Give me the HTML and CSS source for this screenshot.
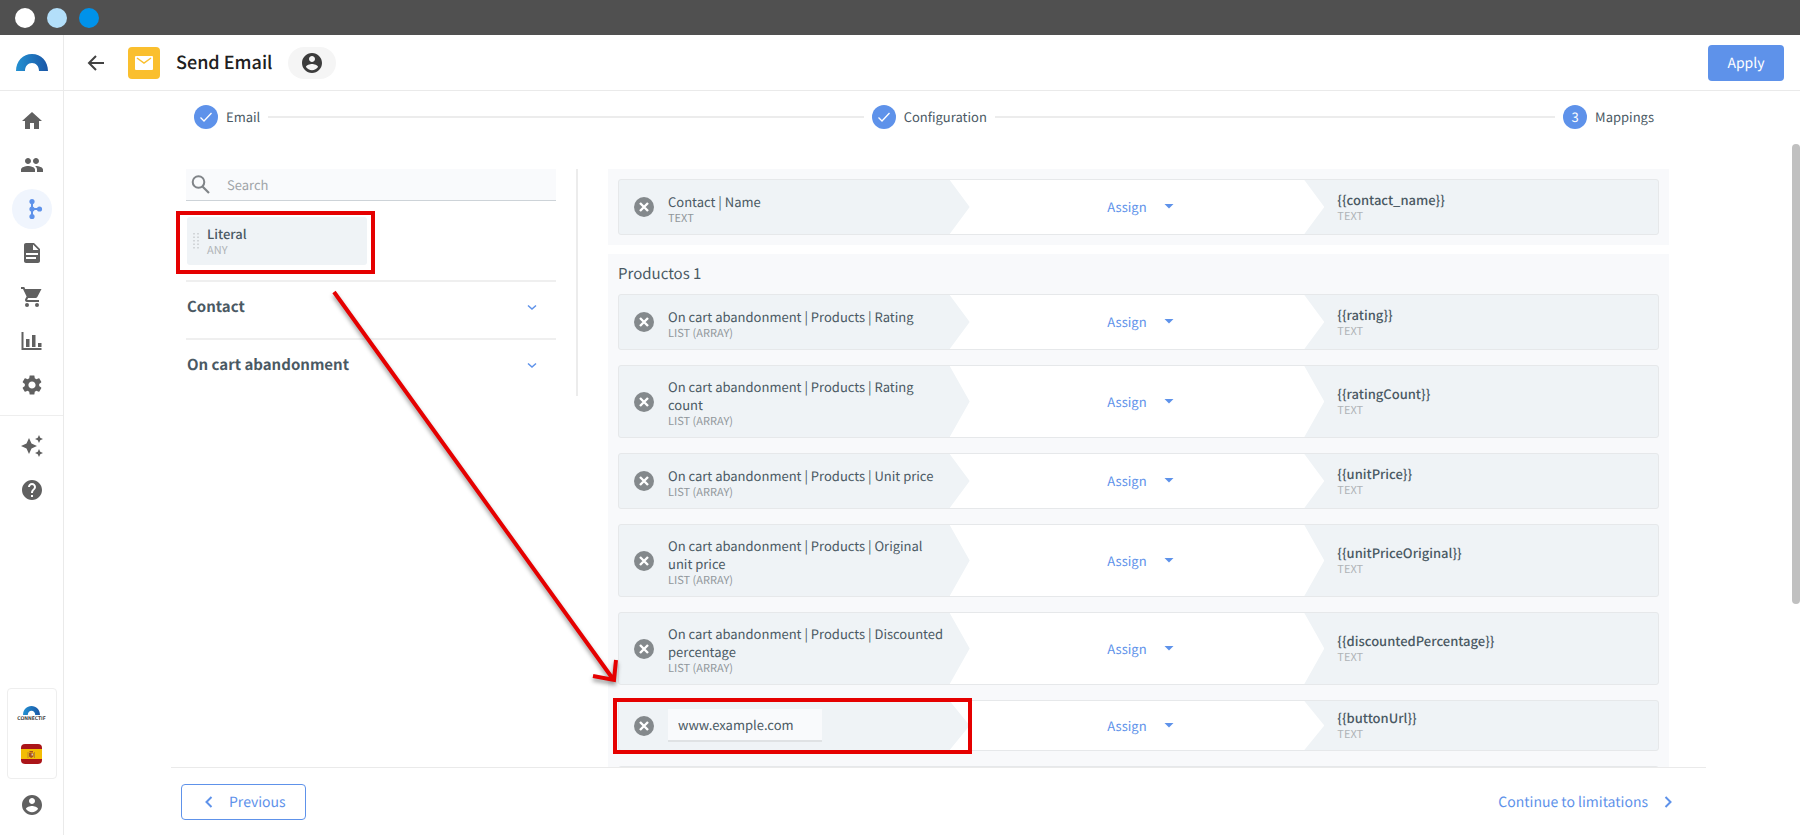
FILE: index.html
```html
<!DOCTYPE html>
<html lang="en">
<head>
    <meta charset="UTF-8">
    <meta name="viewport" content="width=device-width, initial-scale=1.0">
    <title>Send Email</title>
    <link rel="stylesheet" href="styles.css">
</head>
<body>
    <!-- Shared icons -->
    <svg class="sprite" aria-hidden="true">
        <linearGradient id="brand" x1="0" x2="1" y1="0" y2="0">
            <stop offset="0" stop-color="#2391d2"/>
            <stop offset="1" stop-color="#1a56a6"/>
        </linearGradient>
        <symbol id="arch" viewBox="0 0 32 17"><path fill="url(#brand)" d="M0 17C0 7 7 0 16 0s16 7 16 17h-9c0-5-3-8-7-8s-7 3-7 8z"/></symbol>
        <symbol id="clear" viewBox="0 0 24 24"><circle cx="12" cy="12" r="10" fill="#84898c"/><path d="M8 8l8 8M16 8l-8 8" stroke="#fff" stroke-width="2.4"/></symbol>
        <symbol id="caret" viewBox="0 0 24 24"><path fill="currentColor" d="M7.500 9h9L12 13.500z"/></symbol>
        <symbol id="check" viewBox="0 0 24 24"><path d="M6.500 12.500l3.500 3.500 7.500-8" fill="none" stroke="#fff" stroke-width="1.300"/></symbol>
        <symbol id="down" viewBox="0 0 24 24"><path d="M8 10.500l4 3.500 4-3.500" fill="none" stroke="#5e92ea" stroke-width="1.500"/></symbol>
        <symbol id="account" viewBox="0 0 24 24"><path fill="currentColor" d="M12 2C6.480 2 2 6.480 2 12s4.480 10 10 10 10-4.480 10-10S17.520 2 12 2zm0 3c1.660 0 3 1.340 3 3s-1.340 3-3 3-3-1.340-3-3 1.340-3 3-3zm0 14.200c-2.500 0-4.710-1.280-6-3.220.03-1.990 4-3.080 6-3.080 1.990 0 5.970 1.090 6 3.080-1.290 1.940-3.500 3.220-6 3.220z"/></symbol>
    </svg>

    <div class="window-bar">
        <span class="dot dot-white"></span>
        <span class="dot dot-light"></span>
        <span class="dot dot-blue"></span>
    </div>

    <div class="app">
        <nav class="sidebar" aria-label="Main">
            <a class="brand" href="#" aria-label="Connectif"><svg width="32" height="17"><use href="#arch"/></svg></a>
            <div class="nav-list">
                <a class="nav-item" href="#" aria-label="Home"><svg viewBox="0 0 24 24"><path d="M10 20v-6h4v6h5v-8h3L12 3 2 12h3v8z"/></svg></a>
                <a class="nav-item" href="#" aria-label="Contacts"><svg viewBox="0 0 24 24"><path d="M16 11c1.660 0 2.990-1.340 2.990-3S17.660 5 16 5s-3 1.340-3 3 1.340 3 3 3zm-8 0c1.660 0 2.990-1.340 2.990-3S9.660 5 8 5 5 6.340 5 8s1.340 3 3 3zm0 2c-2.330 0-7 1.170-7 3.500V19h14v-2.500C15 14.170 10.330 13 8 13zm8 0c-.29 0-.62.02-.97.05 1.160.84 1.970 1.970 1.970 3.450V19h6v-2.500c0-2.330-4.670-3.500-7-3.500z"/></svg></a>
                <a class="nav-item active" href="#" aria-label="Workflows"><svg viewBox="0 0 24 24"><path d="M12 4.500v15M12 12h7.500" stroke="currentColor" stroke-width="2"/><circle cx="12" cy="4.500" r="2.600"/><circle cx="12" cy="12" r="2.600"/><circle cx="12" cy="19.500" r="2.600"/><circle cx="19.500" cy="12" r="2.600"/></svg></a>
                <a class="nav-item" href="#" aria-label="Content"><svg viewBox="0 0 24 24"><path d="M14 2H6c-1.100 0-2 .9-2 2v16c0 1.100.9 2 2 2h12c1.100 0 2-.9 2-2V8l-6-6zm2 16H6v-2h10v2zm2-4H6v-2h12v2zm-5-5V3.500L18.500 9H13z"/></svg></a>
                <a class="nav-item" href="#" aria-label="Products"><svg viewBox="0 0 24 24"><circle cx="7" cy="20" r="2"/><circle cx="17" cy="20" r="2"/><path d="M1 2v2h2l3.600 7.590-1.350 2.450C4.520 15.370 5.480 17 7 17h12v-2H7.420c-.2 0-.3-.2-.22-.37L8.100 13h7.450c.75 0 1.410-.41 1.750-1.030L21.500 4H5.210L4.270 2H1z"/></svg></a>
                <a class="nav-item" href="#" aria-label="Reports"><svg viewBox="0 0 24 24"><path d="M1.500 3h2v16h18v2h-20zM6 10h3.500v8H6zM12 6h3.500v12H12zM18 14h3.500v4H18z"/></svg></a>
                <a class="nav-item" href="#" aria-label="Settings"><svg viewBox="0 0 24 24"><path d="M19.140 12.940c.04-.3.06-.61.06-.94 0-.32-.02-.64-.07-.94l2.030-1.580c.18-.14.23-.41.12-.61l-1.920-3.320c-.12-.22-.37-.29-.59-.22l-2.390.96c-.5-.38-1.030-.7-1.620-.94l-.36-2.540c-.04-.24-.24-.41-.48-.41h-3.840c-.24 0-.43.17-.47.41l-.36 2.540c-.59.24-1.130.57-1.620.94l-2.390-.96c-.22-.08-.47 0-.59.22L2.740 8.870c-.12.21-.08.47.12.61l2.030 1.580c-.05.3-.09.63-.09.94s.02.64.07.94l-2.030 1.580c-.18.14-.23.41-.12.61l1.920 3.320c.12.22.37.29.59.22l2.390-.96c.5.38 1.030.7 1.620.94l.36 2.540c.05.24.24.41.48.41h3.840c.24 0 .44-.17.47-.41l.36-2.540c.59-.24 1.130-.56 1.620-.94l2.390.96c.22.08.47 0 .59-.22l1.920-3.320c.12-.22.07-.47-.12-.61l-2.010-1.580zM12 15.600c-1.980 0-3.600-1.620-3.600-3.600s1.620-3.600 3.600-3.600 3.600 1.620 3.600 3.600-1.620 3.600-3.600 3.600z"/></svg></a>
            </div>
            <div class="nav-list nav-extra">
                <a class="nav-item" href="#" aria-label="Assistant"><svg viewBox="0 0 24 24"><path d="M19 9l1.250-2.750L23 5l-2.750-1.250L19 1l-1.250 2.750L15 5l2.750 1.250zM19 15l-1.250 2.750L15 19l2.750 1.250L19 23l1.250-2.750L23 19l-2.750-1.250zM11.500 9.500L9 4 6.500 9.500 1 12l5.500 2.500L9 20l2.500-5.500L17 12z"/></svg></a>
                <a class="nav-item" href="#" aria-label="Help"><svg viewBox="0 0 24 24"><path d="M12 2C6.480 2 2 6.480 2 12s4.480 10 10 10 10-4.480 10-10S17.520 2 12 2zm1 17h-2v-2h2v2zm2.070-7.750l-.9.92C13.450 12.900 13 13.500 13 15h-2v-.5c0-1.100.45-2.100 1.170-2.830l1.240-1.260c.37-.36.59-.86.59-1.410 0-1.100-.9-2-2-2s-2 .9-2 2H8c0-2.210 1.790-4 4-4s4 1.790 4 4c0 .88-.36 1.680-.93 2.250z"/></svg></a>
            </div>
            <div class="store">
                <div class="store-logo">
                    <svg width="17" height="9"><use href="#arch"/></svg>
                    <span>CONNECTIF</span>
                </div>
                <svg class="flag" viewBox="0 0 21 20" role="img" aria-label="Spain">
                    <path fill="#ab1519" d="M0 0h21v20H0z"/>
                    <path fill="#f3bd05" d="M0 5h21v10H0z"/>
                    <path fill="#b98a2c" d="M6.500 8h1v6h-1zM13 8h1v6h-1z"/>
                    <path fill="#a8501f" d="M8 9h4.500v3.500L10.200 14 8 12.500zM8.500 7h3.500v1.500H8.500z"/>
                    <path fill="#d8c7b0" d="M10.500 9.500H12v2h-1.500z"/>
                </svg>
            </div>
            <a class="nav-item" href="#" aria-label="Account"><svg viewBox="0 0 24 24"><use href="#account"/></svg></a>
        </nav>

        <div class="page">
            <header class="header">
                <button class="icon-button" type="button" aria-label="Back"><svg width="24" height="24" viewBox="0 0 24 24"><path d="M20 12H5M12 5l-7 7 7 7" fill="none" stroke="#424242" stroke-width="2"/></svg></button>
                <span class="mail-icon"><svg width="18" height="14" viewBox="0 0 18 14"><rect width="18" height="14" rx="1" fill="#fff"/><path d="M2 2l7 5 7-5" fill="none" stroke="#fabf2e" stroke-width="1.500"/></svg></span>
                <h1>Send Email</h1>
                <button class="account-pill" type="button" aria-label="Account"><svg width="24" height="24"><use href="#account"/></svg></button>
                <button class="apply" type="button">Apply</button>
            </header>

            <main class="content">
                <ol class="stepper">
                    <li><span class="step-dot"><svg width="24" height="24"><use href="#check"/></svg></span>Email</li>
                    <li><span class="step-dot"><svg width="24" height="24"><use href="#check"/></svg></span>Configuration</li>
                    <li><span class="step-dot">3</span>Mappings</li>
                </ol>

                <div class="columns">
                    <aside class="fields">
                        <label class="search">
                            <svg width="24" height="24" viewBox="0 0 24 24" aria-hidden="true"><circle cx="9.500" cy="9" r="5.800" fill="none" stroke="#808488" stroke-width="2"/><path d="M13.500 13.500l6.500 6.500" stroke="#808488" stroke-width="2.200"/></svg>
                            <input type="text" placeholder="Search" aria-label="Search">
                        </label>
                        <div class="literal marked">
                            <svg width="6" height="16" viewBox="0 0 6 16"><path d="M1 0v16M5 0v16" stroke="#c9cdd0" stroke-width="1.500" stroke-dasharray="1.500 2"/></svg>
                            <div>
                                <div class="name">Literal</div>
                                <div class="type">ANY</div>
                            </div>
                        </div>
                        <button class="group-toggle" type="button">Contact<svg width="24" height="24"><use href="#down"/></svg></button>
                        <button class="group-toggle" type="button">On cart abandonment<svg width="24" height="24"><use href="#down"/></svg></button>
                    </aside>

                    <div class="mappings">
                        <section class="group">
                            <div class="row">
                                <div class="source">
                                    <button class="icon-button" type="button" aria-label="Remove"><svg width="24" height="24"><use href="#clear"/></svg></button>
                                    <div><div class="name">Contact | Name</div><div class="type">TEXT</div></div>
                                </div>
                                <div class="action"><button class="assign" type="button">Assign<svg width="24" height="24"><use href="#caret"/></svg></button></div>
                                <div class="target"><div class="name">{{contact_name}}</div><div class="type">TEXT</div></div>
                            </div>
                        </section>

                        <section class="group">
                            <h2>Productos 1</h2>
                            <div class="row">
                                <div class="source">
                                    <button class="icon-button" type="button" aria-label="Remove"><svg width="24" height="24"><use href="#clear"/></svg></button>
                                    <div><div class="name">On cart abandonment | Products | Rating</div><div class="type">LIST (ARRAY)</div></div>
                                </div>
                                <div class="action"><button class="assign" type="button">Assign<svg width="24" height="24"><use href="#caret"/></svg></button></div>
                                <div class="target"><div class="name">{{rating}}</div><div class="type">TEXT</div></div>
                            </div>
                            <div class="row">
                                <div class="source">
                                    <button class="icon-button" type="button" aria-label="Remove"><svg width="24" height="24"><use href="#clear"/></svg></button>
                                    <div><div class="name">On cart abandonment | Products | Rating count</div><div class="type">LIST (ARRAY)</div></div>
                                </div>
                                <div class="action"><button class="assign" type="button">Assign<svg width="24" height="24"><use href="#caret"/></svg></button></div>
                                <div class="target"><div class="name">{{ratingCount}}</div><div class="type">TEXT</div></div>
                            </div>
                            <div class="row">
                                <div class="source">
                                    <button class="icon-button" type="button" aria-label="Remove"><svg width="24" height="24"><use href="#clear"/></svg></button>
                                    <div><div class="name">On cart abandonment | Products | Unit price</div><div class="type">LIST (ARRAY)</div></div>
                                </div>
                                <div class="action"><button class="assign" type="button">Assign<svg width="24" height="24"><use href="#caret"/></svg></button></div>
                                <div class="target"><div class="name">{{unitPrice}}</div><div class="type">TEXT</div></div>
                            </div>
                            <div class="row">
                                <div class="source">
                                    <button class="icon-button" type="button" aria-label="Remove"><svg width="24" height="24"><use href="#clear"/></svg></button>
                                    <div><div class="name">On cart abandonment | Products | Original unit price</div><div class="type">LIST (ARRAY)</div></div>
                                </div>
                                <div class="action"><button class="assign" type="button">Assign<svg width="24" height="24"><use href="#caret"/></svg></button></div>
                                <div class="target"><div class="name">{{unitPriceOriginal}}</div><div class="type">TEXT</div></div>
                            </div>
                            <div class="row">
                                <div class="source">
                                    <button class="icon-button" type="button" aria-label="Remove"><svg width="24" height="24"><use href="#clear"/></svg></button>
                                    <div><div class="name">On cart abandonment | Products | Discounted percentage</div><div class="type">LIST (ARRAY)</div></div>
                                </div>
                                <div class="action"><button class="assign" type="button">Assign<svg width="24" height="24"><use href="#caret"/></svg></button></div>
                                <div class="target"><div class="name">{{discountedPercentage}}</div><div class="type">TEXT</div></div>
                            </div>
                            <div class="row row-literal">
                                <div class="source marked">
                                    <button class="icon-button" type="button" aria-label="Remove"><svg width="24" height="24"><use href="#clear"/></svg></button>
                                    <input type="text" value="www.example.com" aria-label="Literal value">
                                </div>
                                <div class="action"><button class="assign" type="button">Assign<svg width="24" height="24"><use href="#caret"/></svg></button></div>
                                <div class="target"><div class="name">{{buttonUrl}}</div><div class="type">TEXT</div></div>
                            </div>
                            <div class="row"></div>
                        </section>
                    </div>
                </div>
            </main>

            <footer class="footer">
                <button class="previous" type="button"><svg width="24" height="24" viewBox="0 0 24 24"><path d="M14.500 7l-5 5 5 5" fill="none" stroke="currentColor" stroke-width="2"/></svg>Previous</button>
                <button class="continue" type="button">Continue to limitations<svg width="24" height="24" viewBox="0 0 24 24"><path d="M9.500 7l5 5-5 5" fill="none" stroke="currentColor" stroke-width="2"/></svg></button>
            </footer>
            <div class="scroll-thumb"></div>
        </div>
    </div>

    <!-- Drag hint: from the literal to the field -->
    <svg class="drag-arrow" width="300" height="410" viewBox="0 0 300 410" aria-hidden="true">
        <path d="M5 3L284 390M264 387l21 4 2-20" fill="none" stroke="#e50000" stroke-width="4"/>
    </svg>
</body>
</html>
```
FILE: styles.css
```css
* {
    box-sizing: border-box;
}

body {
    margin: 0;
    height: 100vh;
    display: flex;
    flex-direction: column;
    overflow: hidden;
    background-color: #fff;
    color: #4a5963;
    font-family: "Noto Sans CJK SC", "Noto Sans", sans-serif;
    font-size: 13px;
    line-height: 18px;
    text-rendering: geometricPrecision;
}

button, input {
    font: inherit;
    color: inherit;
    text-rendering: inherit;
    border: none;
    background: none;
    padding: 0;
}

button {
    display: flex;
    align-items: center;
    cursor: pointer;
}

svg {
    display: block;
    flex-shrink: 0;
}

.sprite {
    position: absolute;
    width: 0;
    height: 0;
}

/* Window bar */
.window-bar {
    display: flex;
    align-items: center;
    gap: 12px;
    height: 35px;
    flex-shrink: 0;
    padding-left: 15px;
    background-color: #505050;
}

.dot {
    width: 20px;
    height: 20px;
    border-radius: 50%;
}

.dot-white { background-color: #fff; }
.dot-light { background-color: #b3dffa; }
.dot-blue { background-color: #0092ea; }

.app {
    display: flex;
    flex: 1;
    min-height: 0;
}

/* Sidebar */
.sidebar {
    display: flex;
    flex-direction: column;
    align-items: center;
    width: 64px;
    flex-shrink: 0;
    padding-bottom: 10px;
    border-right: 1px solid #eaeaea;
    color: #606060;
}

.brand {
    display: flex;
    align-items: center;
    justify-content: center;
    width: 100%;
    height: 56px;
    border-bottom: 1px solid #eaeaea;
}

.nav-list {
    display: flex;
    flex-direction: column;
    align-items: center;
    gap: 4px;
    width: 100%;
    padding: 10px 0;
}

.nav-extra {
    border-top: 1px solid #eee;
    margin-bottom: auto;
}

.nav-item {
    display: flex;
    align-items: center;
    justify-content: center;
    width: 40px;
    height: 40px;
    border-radius: 50%;
    color: inherit;
}

.nav-item svg {
    width: 24px;
    height: 24px;
    fill: currentColor;
}

.nav-item.active {
    background-color: #f0f5fd;
    color: #5e92ea;
}

.store {
    display: flex;
    flex-direction: column;
    align-items: center;
    gap: 23px;
    width: 50px;
    margin-bottom: 6px;
    padding: 17px 0 14px;
    border: 1px solid #eee;
    border-radius: 4px;
}

.store-logo {
    display: flex;
    flex-direction: column;
    align-items: center;
    gap: 2px;
    color: #333;
    font-size: 5px;
    font-weight: bold;
    line-height: 4px;
}

.flag {
    width: 21px;
    height: 20px;
    border-radius: 4px;
}

/* Header */
.page {
    position: relative;
    display: flex;
    flex-direction: column;
    flex: 1;
    min-width: 0;
}

.header {
    display: flex;
    align-items: center;
    height: 56px;
    flex-shrink: 0;
    padding: 0 16px 0 20px;
    border-bottom: 1px solid #eaeaea;
}

.mail-icon {
    display: flex;
    align-items: center;
    justify-content: center;
    width: 32px;
    height: 32px;
    margin: 0 16px 0 20px;
    border-radius: 4px;
    background-color: #fabf2e;
}

h1 {
    margin: 0;
    padding-bottom: 2px;
    color: #202020;
    font-size: 18px;
    font-weight: 500;
    line-height: 24px;
}

.account-pill {
    justify-content: center;
    width: 48px;
    height: 32px;
    margin-left: 16px;
    border-radius: 16px;
    background-color: #f5f5f5;
    color: #3c3c3c;
}

.apply {
    justify-content: center;
    width: 76px;
    height: 36px;
    margin-left: auto;
    border-radius: 4px;
    background-color: #5e92ea;
    color: #fff;
    font-size: 14px;
}

/* Content */
.content {
    flex: 1;
    min-height: 0;
    overflow: hidden;
    padding: 14px 131px 0 122px;
}

.stepper {
    display: flex;
    align-items: center;
    margin: 0 15px 40px 8px;
    padding: 0;
    list-style: none;
}

.stepper li {
    display: flex;
    align-items: center;
    gap: 8px;
}

.stepper li:first-child {
    flex: 98;
}

.stepper li:nth-child(2) {
    flex: 100;
}

.stepper li:not(:last-child)::after {
    content: "";
    flex: 1;
    height: 2px;
    margin-right: 8px;
    background-color: #ececec;
}

.step-dot {
    display: flex;
    align-items: center;
    justify-content: center;
    width: 24px;
    height: 24px;
    border-radius: 50%;
    background-color: #5e92ea;
    color: #fff;
}

.columns {
    display: flex;
    align-items: flex-start;
}

.fields {
    width: 392px;
    flex-shrink: 0;
    margin-right: 30px;
    padding-right: 20px;
    border-right: 2px solid #ececec;
}

.search {
    display: flex;
    align-items: center;
    gap: 12px;
    height: 32px;
    padding-left: 3px;
    border-bottom: 1px solid #cdd3d8;
    background-color: #f9fafc;
}

.search input {
    flex: 1;
    padding-left: 2px;
    outline: none;
}

.search input::placeholder {
    color: #a0a4a8;
}

.literal {
    display: flex;
    align-items: center;
    gap: 8px;
    width: 180px;
    height: 48px;
    margin: 16px 0 15px 1px;
    padding-left: 6px;
    border-radius: 3px;
    background-color: #eff3f6;
}

.literal .name, .target .name {
    font-weight: 500;
}

.type {
    color: #91979b;
    font-size: 11px;
    line-height: 15px;
}

.literal .type, .target .type {
    color: #b0b4b7;
}

/* Red frames around the highlighted parts */
.marked {
    position: relative;
}

.marked::after {
    content: "";
    position: absolute;
    inset: -6px -8px -9px -11px;
    border: 4px solid #e50000;
    z-index: 2;
}

.group-toggle {
    justify-content: space-between;
    width: 100%;
    height: 58px;
    padding: 0 12px 6px 1px;
    border-top: 2px solid #efefef;
    font-size: 15px;
    font-weight: bold;
}

/* Mappings */
.mappings {
    flex: 1;
    min-width: 0;
}

.group {
    margin-bottom: 9px;
    padding: 10px;
    background-color: #f8f9fb;
}

h2 {
    margin: 0 0 10px;
    font-size: 15px;
    font-weight: normal;
    line-height: 20px;
}

.row {
    display: grid;
    grid-template-columns: 331fr 375fr 334fr;
    min-height: 56px;
    border: 1px solid #e6e8ea;
    border-radius: 3px;
    background-color: #eff3f6;
}

.row + .row {
    margin-top: 15px;
}

.icon-button {
    flex-shrink: 0;
}

.source {
    display: flex;
    align-items: center;
    gap: 12px;
    padding: 0 0 0 13px;
}

.source > div {
    padding: 12px 0 8px;
}

.action {
    display: flex;
    align-items: center;
    justify-content: center;
    padding-left: 14px;
    background-color: #fff;
    clip-path: polygon(0 0, calc(100% - 20px) 0, 100% 50%, calc(100% - 20px) 100%, 0 100%, 20px 50%);
}

.assign {
    gap: 10px;
    color: #5e92ea;
}

.target {
    display: flex;
    flex-direction: column;
    justify-content: center;
    padding-left: 13px;
}

.row-literal {
    min-height: 51px;
}

.row-literal .marked::after {
    inset: -3px -22px -4px -6px;
}

.row-literal input {
    width: 154px;
    height: 33px;
    padding: 0 10px;
    border-bottom: 2px solid #dfe2e4;
    background-color: #f9fafc;
    outline: none;
}

/* Footer */
.footer {
    display: flex;
    align-items: center;
    justify-content: space-between;
    height: 68px;
    flex-shrink: 0;
    margin: 0 94px 0 107px;
    padding: 0 26px 0 10px;
    border-top: 1px solid #eaeaea;
    color: #5e92ea;
    font-size: 14px;
}

.previous {
    gap: 8px;
    height: 36px;
    padding: 0 19px 0 15px;
    border: 1px solid #5e92ea;
    border-radius: 4px;
}

.continue {
    gap: 8px;
}

.scroll-thumb {
    position: absolute;
    top: 109px;
    right: 0;
    width: 8px;
    height: 58%;
    max-height: 460px;
    border-radius: 4px;
    background-color: #c0c0c0;
}

.drag-arrow {
    position: absolute;
    top: 289px;
    left: 329px;
    z-index: 3;
    filter: drop-shadow(0 3px 2px rgba(0, 0, 0, 0.4));
}
```
